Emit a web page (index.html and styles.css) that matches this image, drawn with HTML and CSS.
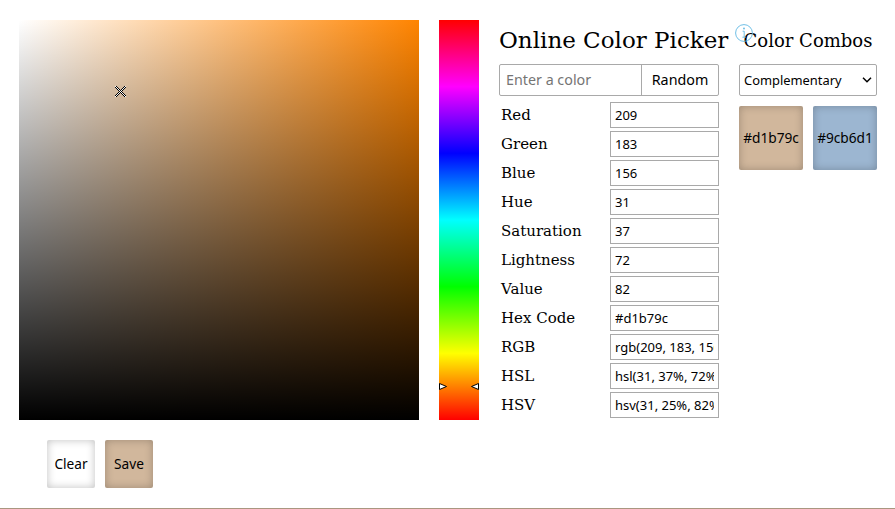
FILE: index.html
```html
<!DOCTYPE html>
<html lang="en">
<head>
<meta charset="utf-8">
<title>Online Color Picker</title>
<link rel="stylesheet" href="styles.css">
</head>
<body>
<main class="picker">
  <section class="choose">
    <div class="field">
      <svg class="cross" width="11" height="11" viewBox="0 0 11 11" shape-rendering="crispEdges"><defs><path id="stair" d="M0 0h2v1h1v1h1v1h1v1h1v1h1v1h1v1h1v1h1v1h1v2h-2v-1h-1v-1h-1v-1h-1v-1h-1v-1h-1v-1h-1v-1h-1v-1h-1v-1h-1z"/><path id="core" fill="#fff" d="M0 0h1v1h-1zM1 1h1v1h-1zM2 2h1v1h-1zM3 3h1v1h-1zM4 4h1v1h-1zM5 5h1v1h-1zM6 6h1v1h-1zM7 7h1v1h-1zM8 8h1v1h-1zM9 9h1v1h-1zM10 10h1v1h-1z"/></defs><use href="#stair"/><use href="#stair" transform="matrix(-1 0 0 1 11 0)"/><use href="#core"/><use href="#core" transform="matrix(-1 0 0 1 11 0)"/></svg>
    </div>
    <div class="saved">
      <button class="chip clear">Clear</button>
      <button class="chip save">Save</button>
    </div>
  </section>
  <div class="hue">
    <svg class="pointer" width="8" height="7" viewBox="0 0 8 7"><path d="M.5.5L7.5 3.5.5 6.5z" fill="#fff" stroke="#000"/></svg>
    <svg class="pointer flip" width="8" height="7" viewBox="0 0 8 7"><path d="M.5.5L7.5 3.5.5 6.5z" fill="#fff" stroke="#000"/></svg>
  </div>
  <section class="values">
    <h1>Online Color Picker<svg class="info" width="18" height="18" viewBox="0 0 18 18"><circle cx="9" cy="9" r="8.4" fill="none" stroke="#61b9e3" stroke-width=".9"/><path d="M7.6 7.2h1.6v6M7.4 13.2h3.4" fill="none" stroke="#61b9e3" stroke-width=".9"/><circle cx="9" cy="4.5" r=".9" fill="#61b9e3"/></svg></h1>
    <div class="search"><input placeholder="Enter a color" aria-label="Color"><button>Random</button></div>
    <div class="rows">
      <label>Red<input value="209"></label>
      <label>Green<input value="183"></label>
      <label>Blue<input value="156"></label>
      <label>Hue<input value="31"></label>
      <label>Saturation<input value="37"></label>
      <label>Lightness<input value="72"></label>
      <label>Value<input value="82"></label>
      <label>Hex Code<input value="#d1b79c"></label>
      <label>RGB<input value="rgb(209, 183, 156)"></label>
      <label>HSL<input value="hsl(31, 37%, 72%)"></label>
      <label>HSV<input value="hsv(31, 25%, 82%)"></label>
    </div>
  </section>
  <section class="combos">
    <h2>Color Combos</h2>
    <div class="select">Complementary<svg width="10" height="6" viewBox="0 0 10 6"><path d="M1 .8l4 4 4-4" fill="none" stroke="#000" stroke-width="1.5"/></svg></div>
    <div class="swatches"><div class="chip tan">#d1b79c</div><div class="chip blue">#9cb6d1</div></div>
  </section>
</main>
</body>
</html>
```
FILE: styles.css
```css
* { box-sizing: border-box; }
html { height: 509px; overflow: hidden; }
body { margin: 0; height: 509px; overflow: hidden; background: #fff; color: #000; font-family: "DejaVu Serif", serif; border-bottom: 1px solid #a99680; }
input, button, .select, .chip { font-family: "Noto Sans", "Open Sans", sans-serif; color: #000; }
.picker { display: flex; gap: 20px; padding: 20px 18px 0 19px; }
.choose { width: 400px; flex: none; }
.field { position: relative; height: 400px; background: linear-gradient(to top, #000, transparent), linear-gradient(to right, #fff, #ff8400); }
.cross { position: absolute; left: 96px; top: 66px; }
.saved { display: flex; gap: 10px; padding: 20px 28px; }
.chip { display: flex; align-items: center; justify-content: center; padding: 0 0 2px; border: 0; border-radius: 2px; box-shadow: inset 0 0 8px rgba(0, 0, 0, .25); font-size: 13.7px; white-space: nowrap; }
.saved .chip { width: 48px; height: 48px; }
.clear { background: #fff; }
.save, .tan { background: #d1b79c; }
.blue { background: #9cb6d1; }
.hue { position: relative; width: 40px; height: 400px; flex: none; background: linear-gradient(#f00, #f0f, #00f, #0ff, #0f0, #ff0, #f00); }
.pointer { position: absolute; left: 0; top: 363px; }
.flip { left: auto; right: 0; transform: scaleX(-1); }
.values { width: 220px; flex: none; }
h1, h2 { margin: 0; height: 44px; font-weight: 400; white-space: nowrap; }
h1 { position: relative; font-size: 23px; line-height: 40px; }
.info { position: absolute; left: 236px; top: 4px; }
h2 { font-size: 18px; line-height: 42px; text-align: center; }
.search { display: flex; height: 32px; border: 1px solid #a9a9a9; border-radius: 2px; }
.search input { width: 142px; padding: 0 6px 2px; border: 0; border-right: 1px solid #a9a9a9; background: none; font-size: 14.3px; }
.search input::placeholder { color: #757575; }
.search button { flex: 1; padding: 0 0 2px; border: 0; background: none; font-size: 14.3px; }
.rows { display: grid; gap: 3px; padding-top: 6px; }
.rows label { display: flex; align-items: center; justify-content: space-between; height: 26px; padding-left: 2px; font-size: 15px; }
.rows input { width: 109px; height: 26px; padding: 0 4px; border: 1px solid #a9a9a9; border-radius: 0; font-size: 13px; }
.combos { width: 138px; flex: none; }
.select { display: flex; align-items: center; justify-content: space-between; height: 32px; padding: 0 4px; border: 1px solid #a9a9a9; border-radius: 2px; font-size: 12.9px; }
.swatches { display: flex; gap: 10px; margin-top: 10px; }
.swatches .chip { width: 64px; height: 64px; }
```
